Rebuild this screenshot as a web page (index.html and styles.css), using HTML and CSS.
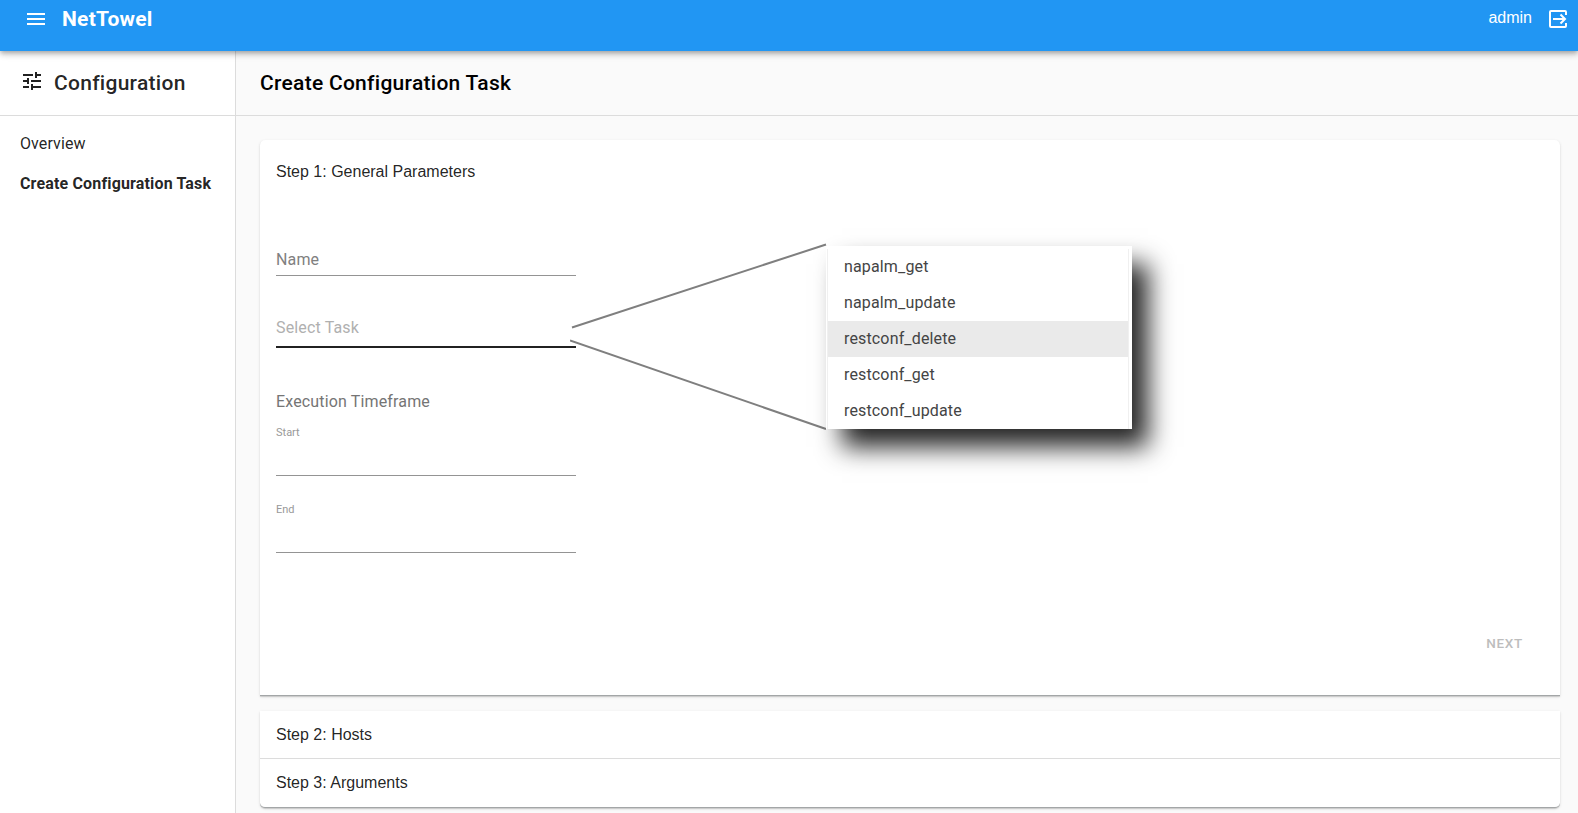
FILE: index.html
```html
<!DOCTYPE html>
<html lang="en">
<head>
<meta charset="utf-8">
<title>NetTowel</title>
<link rel="stylesheet" href="styles.css">
</head>
<body>
<header class="topbar">
  <svg class="icon menu-icon" viewBox="0 0 24 24"><path d="M3 18h18v-2H3v2zm0-5h18v-2H3v2zm0-7v2h18V6H3z"/></svg>
  <span class="brand">NetTowel</span>
  <span class="user">admin</span>
  <svg class="icon exit-icon" viewBox="0 0 24 24"><path d="M20 8V5a1 1 0 0 0-1-1H5a1 1 0 0 0-1 1v14a1 1 0 0 0 1 1h14a1 1 0 0 0 1-1v-3M7 12h12M14.500 7.500L19 12l-4.500 4.500"/></svg>
</header>
<div class="layout">
  <aside class="sidebar">
    <div class="sidebar-head">
      <svg class="icon tune-icon" viewBox="0 0 24 24"><path d="M3 17v2h6v-2H3zM3 5v2h10V5H3zm10 16v-2h8v-2h-8v-2h-2v6h2zM7 9v2H3v2h4v2h2V9H7zm14 4v-2H11v2h10zm-6-4h2V7h4V5h-4V3h-2v6z"/></svg>
      <span class="heading">Configuration</span>
    </div>
    <nav class="nav">
      <a class="nav-item">Overview</a>
      <a class="nav-item active">Create Configuration Task</a>
    </nav>
  </aside>
  <main class="main">
    <h1 class="page-title heading">Create Configuration Task</h1>
    <div class="steps">
      <section class="panel expanded">
        <div class="panel-title">Step 1: General Parameters</div>
        <div class="form">
          <div class="field name-field">Name</div>
          <div class="field task-field">Select Task</div>
          <div class="timeframe">Execution Timeframe</div>
          <div class="field date-field">Start</div>
          <div class="field date-field">End</div>
        </div>
        <div class="actions"><button class="next" disabled>NEXT</button></div>
        <svg class="callout" viewBox="0 0 260 190"><path d="M2 87.500L256 4.500M0 100.500L256 189"/></svg>
        <ul class="options">
          <li class="option">napalm_get</li>
          <li class="option">napalm_update</li>
          <li class="option selected">restconf_delete</li>
          <li class="option">restconf_get</li>
          <li class="option">restconf_update</li>
        </ul>
      </section>
      <div class="panel collapsed">
        <div class="panel-title">Step 2: Hosts</div>
        <div class="panel-title">Step 3: Arguments</div>
      </div>
    </div>
  </main>
</div>
</body>
</html>
```

FILE: styles.css
```css
* { box-sizing: border-box; }
body {
  margin: 0;
  height: 813px;
  overflow: hidden;
  display: flex;
  flex-direction: column;
  background: #fafafa;
  font-family: Roboto, sans-serif;
  font-size: 16px;
  color: rgba(0, 0, 0, .87);
}
.icon { width: 24px; height: 24px; fill: currentColor; flex: none; }
.topbar {
  position: relative;
  z-index: 2;
  flex: none;
  height: 51px;
  padding: 0 8px 13px 24px;
  display: flex;
  align-items: center;
  background: #2196f3;
  color: #fff;
  box-shadow: 0 2px 4px -1px rgba(0,0,0,.2), 0 4px 5px rgba(0,0,0,.14), 0 1px 10px rgba(0,0,0,.12);
}
.brand { margin-left: 14px; font-size: 21px; font-weight: 700; letter-spacing: .25px; }
.user { margin-left: auto; font-family: "Liberation Sans", sans-serif; padding-bottom: 3px; }
.exit-icon { margin-left: 14px; fill: none; stroke: currentColor; stroke-width: 2; }
.layout { flex: 1; display: flex; min-height: 0; }
.sidebar { width: 236px; flex: none; background: #fff; border-right: 1px solid #dcdcdc; }
.sidebar-head {
  height: 65px;
  padding-left: 20px;
  display: flex;
  align-items: center;
  border-bottom: 1px solid #dcdcdc;
}
.tune-icon { margin: 0 10px 4px 0; }
.heading { font-size: 21px; font-weight: 500; line-height: 32px; letter-spacing: .28px; }
.nav { padding-top: 8px; }
.nav-item { display: block; height: 40px; line-height: 40px; padding-left: 20px; letter-spacing: .1px; }
.active { font-weight: 700; letter-spacing: .15px; }
.main { flex: 1; min-width: 0; }
.page-title {
  margin: 0;
  height: 65px;
  padding: 16px 24px;
  border-bottom: 1px solid #dcdcdc;
  color: #000;
}
.steps { padding: 24px 18px 0 24px; display: flex; flex-direction: column; gap: 16px; }
.panel {
  position: relative;
  background: #fff;
  box-shadow: 0 1px 1px rgba(0,0,0,.12), 0 1px 3px rgba(0,0,0,.12);
}
.expanded { height: 556px; margin-bottom: -1px; border-radius: 5px 5px 0 0; border-bottom: 1px solid #a3a6a7; padding: 0 16px; }
.collapsed { height: 97px; border-radius: 0 0 5px 5px; border-bottom: 1px solid #a3a6a7; }
.panel-title { font-family: "Liberation Sans", sans-serif; height: 48px; line-height: 48px; }
.expanded .panel-title { height: 64px; line-height: 64px; }
.collapsed .panel-title { padding-left: 16px; }
.collapsed .panel-title:first-child { border-bottom: 1px solid #dcdcdc; line-height: 47px; }
.form { width: 300px; }
.field { border-bottom: 1px solid #949494; letter-spacing: .15px; }
.name-field { height: 72px; padding-top: 46px; line-height: 20px; color: #808080; }
.task-field { height: 72px; padding-top: 42px; line-height: 20px; color: #b0b0b0; border-bottom: 2px solid #212121; }
.timeframe { height: 77px; padding-top: 44px; line-height: 20px; color: #757575; letter-spacing: .15px; }
.date-field { height: 51px; line-height: 16px; font-size: 11px; color: #999; letter-spacing: 0; }
.date-field + .date-field { height: 77px; padding-top: 26px; }
.actions { display: flex; justify-content: flex-end; padding: 72px 21px 0 0; }
.next {
  border: 0;
  padding: 0;
  background: none;
  font: 500 13.5px/36px Roboto, sans-serif;
  letter-spacing: .7px;
  color: #bdbdbd;
}
.callout {
  position: absolute;
  left: 310px;
  top: 100px;
  width: 260px;
  height: 190px;
  fill: none;
  stroke: #7f7f7f;
  stroke-width: 2;
}
.options {
  position: absolute;
  left: 566px;
  top: 106px;
  width: 306px;
  height: 183px;
  margin: 0;
  padding: 3px 4px 0 2px;
  list-style: none;
  background: #fff;
  box-shadow: 16px 18px 24px rgba(0,0,0,.86);
}
.option { height: 36px; line-height: 36px; padding-left: 16px; letter-spacing: .15px; color: #444; box-shadow: 1px 0 #f0f0f0, -1px 0 #f0f0f0; }
.selected { background: #eaeaea; }
```
